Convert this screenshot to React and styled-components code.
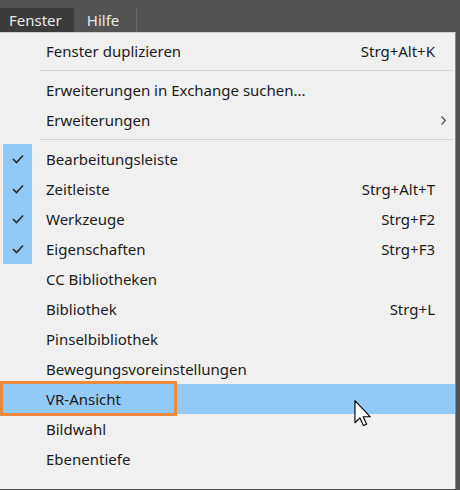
import React from 'react';
import styled, { createGlobalStyle } from 'styled-components';

const GlobalStyle = createGlobalStyle`
  html, body {
    margin: 0;
    padding: 0;
    background: #535353;
    font-family: "Noto Sans", "Open Sans", sans-serif;
  }
`;

const Screen = styled.div`
  width: 460px;
  height: 490px;
  overflow: hidden;
  background: #535353;
`;

const MenuBar = styled.div`
  height: 32px;
  display: flex;
  align-items: flex-end;
  background: #535353;
`;

const MenuTab = styled.div`
  height: 24px;
  display: flex;
  align-items: center;
  padding: 0 ${(p) => p.$padR}px 0 ${(p) => p.$padL}px;
  font-size: 15px;
  color: #e8e8e8;
  background: ${(p) => (p.$active ? '#3b3b3b' : 'transparent')};
  border-right: ${(p) => (p.$divider ? '1px solid #6a6a6a' : 'none')};
`;

const Panel = styled.div`
  width: 456px;
  height: 457px;
  background: #f0f0f0;
  border-right: 1px solid #8a8a8a;
  border-top: 1px solid #d4d4d4;
  padding-top: 3px;
  box-sizing: border-box;
`;

const Row = styled.div`
  position: relative;
  height: 30px;
  display: grid;
  grid-template-columns: 40px 1fr auto 20px;
  align-items: center;
  background: ${(p) => (p.$hover ? '#91c9f7' : 'transparent')};
  color: #1b1b1b;
  font-size: 15px;
`;

const CheckCell = styled.div`
  height: 30px;
  margin-left: 3px;
  width: 29px;
  display: flex;
  align-items: center;
  justify-content: center;
  background: ${(p) => (p.$on ? '#91c9f7' : 'transparent')};
`;

const Label = styled.span`
  padding-left: 6px;
  white-space: nowrap;
`;

const Shortcut = styled.span`
  white-space: nowrap;
  text-align: right;
`;

const Arrow = styled.span`
  display: flex;
  justify-content: flex-end;
  padding-right: 9px;
`;

const Separator = styled.div`
  height: 1px;
  margin: 4px 2px 4px 40px;
  background: #d6d6d6;
`;

const Highlight = styled.div`
  position: absolute;
  left: 0;
  top: -3px;
  width: 177px;
  height: 35px;
  border: 3px solid #ef8a3c;
  box-sizing: border-box;
  pointer-events: none;
`;

const Cursor = styled.svg`
  position: absolute;
  left: 354px;
  top: 16px;
`;

const Check = () => (
  <svg width="12" height="10" viewBox="0 0 12 10">
    <polyline points="1,5 4.5,8.5 11,1.5" fill="none" stroke="#2b2b2b" strokeWidth="1.6" />
  </svg>
);

const Chevron = () => (
  <svg width="5" height="9" viewBox="0 0 5 9">
    <polyline points="0.5,0.5 4.5,4.5 0.5,8.5" fill="none" stroke="#444" strokeWidth="1.2" />
  </svg>
);

const items = [
  { label: 'Fenster duplizieren', key: 'Strg+Alt+K' },
  'sep',
  { label: 'Erweiterungen in Exchange suchen...' },
  { label: 'Erweiterungen', sub: true },
  'sep',
  { label: 'Bearbeitungsleiste', checked: true },
  { label: 'Zeitleiste', checked: true, key: 'Strg+Alt+T' },
  { label: 'Werkzeuge', checked: true, key: 'Strg+F2' },
  { label: 'Eigenschaften', checked: true, key: 'Strg+F3' },
  { label: 'CC Bibliotheken' },
  { label: 'Bibliothek', key: 'Strg+L' },
  { label: 'Pinselbibliothek' },
  { label: 'Bewegungsvoreinstellungen' },
  { label: 'VR-Ansicht', hover: true },
  { label: 'Bildwahl' },
  { label: 'Ebenentiefe' },
];

export default function App() {
  return (
    <Screen>
      <GlobalStyle />
      <MenuBar>
        <MenuTab $active $padL={9} $padR={12}>Fenster</MenuTab>
        <MenuTab $padL={13} $padR={17} $divider>Hilfe</MenuTab>
      </MenuBar>
      <Panel>
        {items.map((it, i) =>
          it === 'sep' ? (
            <Separator key={i} />
          ) : (
            <Row key={i} $hover={it.hover}>
              <CheckCell $on={it.checked}>{it.checked && <Check />}</CheckCell>
              <Label>{it.label}</Label>
              <Shortcut>{it.key}</Shortcut>
              <Arrow>{it.sub && <Chevron />}</Arrow>
              {it.hover && (
                <>
                  <Highlight />
                  <Cursor width="19" height="27" viewBox="0 0 13 19">
                    <path
                      d="M0.5,0.5 L0.5,16 L4,12.6 L6.5,18 L8.7,17 L6.3,11.8 L11.3,11.8 Z"
                      fill="#fff"
                      stroke="#000"
                      strokeWidth="0.8"
                      strokeLinejoin="round"
                    />
                  </Cursor>
                </>
              )}
            </Row>
          )
        )}
      </Panel>
    </Screen>
  );
}
